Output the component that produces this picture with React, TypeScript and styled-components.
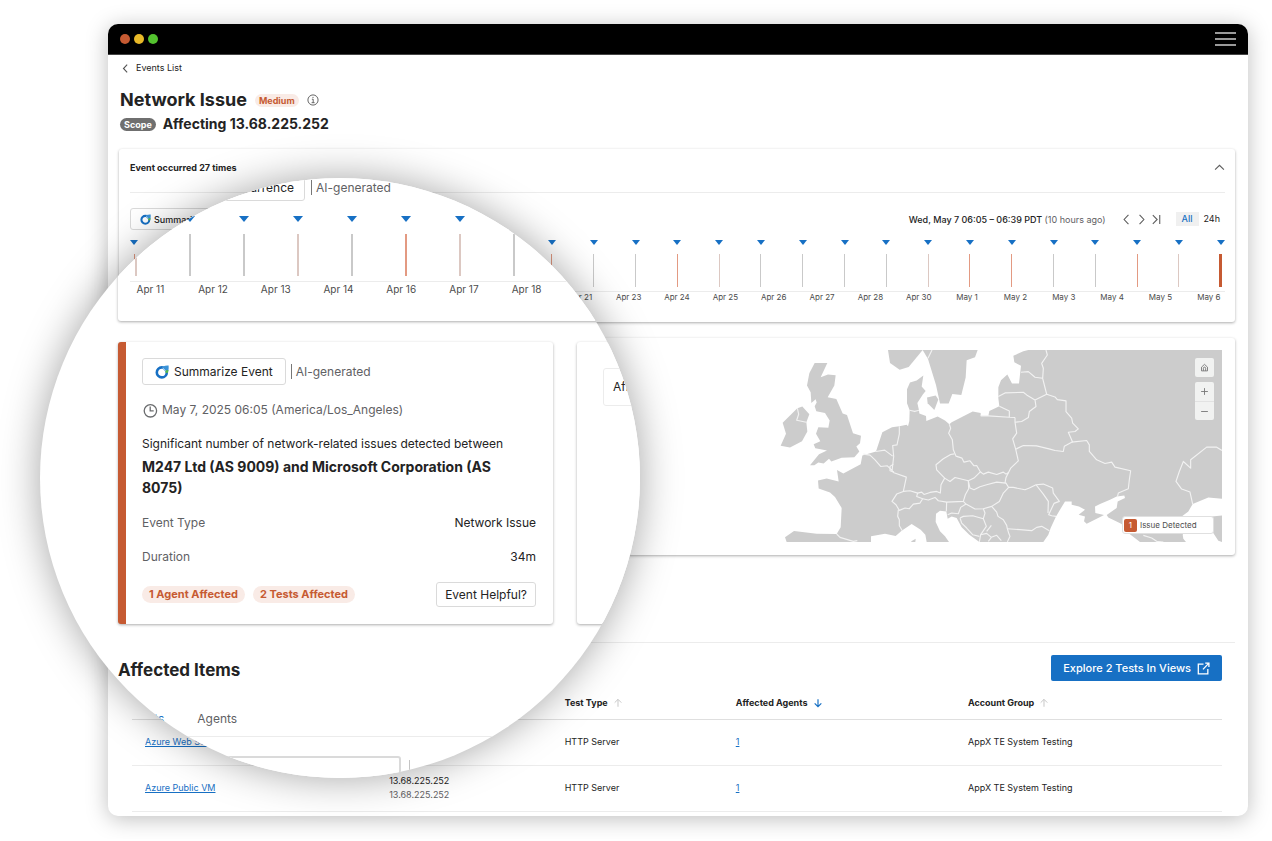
import React from "react";
import styled, { createGlobalStyle } from "styled-components";

const GlobalStyle = createGlobalStyle`
  *, *::before, *::after { box-sizing: border-box; }
  body { margin: 0; background: #fff; font-family: Inter, "Liberation Sans", sans-serif; color: #232323; }
  button, input { font: inherit; color: inherit; }
  h1, h2, h3, p, dl, dd, dt { margin: 0; }
`;

const C = { blue: "#1770c4", orange: "#c65a32", chip: "#f9ebe6", grey: "#5f6164", line: "#ececec", edge: "#dadada", text: "#232323" };

/* ---------- Window ---------- */

const Stage = styled.main`
  position: relative;
  padding: 24px 24px 23px 108px;
  overflow: hidden;
`;

const Window = styled.section`
  border-radius: 10px;
  background: #fff;
  overflow: hidden;
  box-shadow: 0 3px 22px rgba(0, 0, 0, 0.26);
`;

const TitleBar = styled.header`
  display: flex;
  align-items: center;
  justify-content: space-between;
  height: 30px;
  padding: 0 12px;
  background: #000;
  border-bottom: 1px solid #444;
  box-sizing: content-box;
`;

const Lights = styled.div`
  display: flex;
  gap: 4px;
`;

const Light = styled.span<{ $color: string }>`
  width: 10px;
  height: 10px;
  border-radius: 50%;
  background: ${(p) => p.$color};
`;

const IconButton = styled.button`
  display: inline-flex;
  align-items: center;
  justify-content: center;
  padding: 0;
  border: 0;
  background: none;
  color: #5d5d5d;
`;

const Body = styled.div`
  padding: 4px 13px 4px 11px;
`;

const Heading = styled.div`
  padding-left: 1px;
`;

const BackLink = styled.a`
  display: flex;
  align-items: center;
  gap: 5px;
  height: 18px;
  font-size: 9px;
  line-height: 18px;
  color: ${C.text};
  text-decoration: none;
`;

const TitleRow = styled.div<{ $top: number; $gap: number }>`
  display: flex;
  align-items: center;
  gap: ${(p) => p.$gap}px;
  margin-top: ${(p) => p.$top}px;
`;

const Title = styled.h1`
  font-size: 18px;
  line-height: 24px;
  font-weight: 700;
`;

const Subtitle = styled.h2`
  font-size: 14px;
  line-height: 20px;
  font-weight: 700;
`;

const Chip = styled.span<{ $solid?: boolean; $large?: boolean }>`
  display: inline-block;
  padding: 0 ${(p) => (p.$large ? 7 : 4)}px;
  border-radius: 9px;
  font-size: ${(p) => (p.$large ? 11 : 9)}px;
  line-height: ${(p) => (p.$large ? 17 : 13)}px;
  font-weight: 700;
  background: ${(p) => (p.$solid ? "#6f6f6f" : C.chip)};
  color: ${(p) => (p.$solid ? "#fff" : C.orange)};
`;

const Card = styled.section`
  background: #fff;
  border-radius: 3px;
  box-shadow: 0 1px 3px rgba(0, 0, 0, 0.33);
`;

/* ---------- Timeline ---------- */

const TimelineCard = styled(Card)`
  margin-top: 15px;
  height: 173px;
`;

const TimelineHead = styled.div`
  display: flex;
  align-items: center;
  justify-content: space-between;
  height: 44px;
  margin: 0 10px 0 11px;
  padding-bottom: 6px;
  border-bottom: 1px solid ${C.line};
  font-size: 9px;
  font-weight: 700;
`;

const TimelineTools = styled.div`
  display: flex;
  align-items: center;
  justify-content: space-between;
  height: 22px;
  margin: 15px 10px 0 11px;
  font-size: 9px;
`;

const OutlineButton = styled.button<{ $large?: boolean }>`
  display: inline-flex;
  align-items: center;
  gap: ${(p) => (p.$large ? 5 : 3)}px;
  height: ${(p) => (p.$large ? 27 : 22)}px;
  padding: 0 ${(p) => (p.$large ? 12 : 9)}px;
  border: 1px solid ${C.edge};
  border-radius: 3px;
  background: #fff;
  font-size: ${(p) => (p.$large ? 12 : 9)}px;
  font-weight: ${(p) => (p.$large ? 400 : 500)};
  white-space: nowrap;
`;

const Pager = styled.div`
  display: flex;
  align-items: center;
  height: 16px;
  font-weight: 500;
`;

const Muted = styled.span`
  color: ${C.grey};
  font-weight: 400;
`;

const Arrows = styled.div`
  display: flex;
  align-items: center;
  gap: 2px;
  margin: 0 13px 0 14px;
`;

const RangeButton = styled.button<{ $active?: boolean }>`
  height: 14px;
  padding: 0 ${(p) => (p.$active ? 6 : 5)}px;
  border: 0;
  background: ${(p) => (p.$active ? "#f0f0f0" : "none")};
  color: ${(p) => (p.$active ? C.blue : C.text)};
  font-size: 9px;
  line-height: 14px;
  font-weight: ${(p) => (p.$active ? 500 : 400)};
`;

const Markers = styled.div<{ $large?: boolean }>`
  display: flex;
  justify-content: ${(p) => (p.$large ? "flex-start" : "space-between")};
  gap: ${(p) => (p.$large ? 44 : 0)}px;
  margin-top: ${(p) => (p.$large ? 15 : 10)}px;
  padding: 0 ${(p) => (p.$large ? 0 : 9)}px 0 ${(p) => (p.$large ? 13 : 10)}px;
  border-bottom: 1px solid transparent;
`;

const Marker = styled.div<{ $large?: boolean }>`
  display: flex;
  flex: none;
  flex-direction: column;
  align-items: center;
  width: 10px;
  gap: ${(p) => (p.$large ? 12 : 9)}px;
`;

const Pointer = styled.span<{ $large?: boolean }>`
  width: 0;
  height: 0;
  border-left: ${(p) => (p.$large ? 5 : 4)}px solid transparent;
  border-right: ${(p) => (p.$large ? 5 : 4)}px solid transparent;
  border-top: ${(p) => (p.$large ? 6 : 5)}px solid ${C.blue};
`;

const Tick = styled.span<{ $large?: boolean; $color: string; $wide?: boolean }>`
  width: ${(p) => (p.$wide ? 3 : p.$large ? 2 : 1)}px;
  height: ${(p) => (p.$large ? 42 : 33)}px;
  background: ${(p) => p.$color};
`;

const Dates = styled.div<{ $large?: boolean }>`
  display: flex;
  margin-top: ${(p) => (p.$large ? 4 : 3)}px;
  margin-left: ${(p) => (p.$large ? 12 : 10)}px;
  margin-right: ${(p) => (p.$large ? 0 : 10)}px;
  border-top: 1px solid ${C.line};
`;

const DateLabels = styled.div<{ $large?: boolean }>`
  display: grid;
  flex: ${(p) => (p.$large ? "0 0 439px" : "1")};
  grid-template-columns: repeat(${(p) => (p.$large ? 7 : 23)}, minmax(0, 1fr));
  margin: 0 ${(p) => (p.$large ? 0 : -8)}px 0 ${(p) => (p.$large ? -11 : -8)}px;
  font-size: ${(p) => (p.$large ? 10 : 8)}px;
  line-height: ${(p) => (p.$large ? 14 : 10)}px;
  text-align: center;
  color: #4c4c4c;
  white-space: nowrap;
`;

/* ---------- Map ---------- */

const MapCard = styled(Card)`
  display: flex;
  justify-content: flex-end;
  margin-top: 16px;
  padding: 12px 13px 13px;
`;

const MapFrame = styled.div`
  position: relative;
  width: 442px;
  height: 192px;
`;

const MapControls = styled.div`
  position: absolute;
  top: 8px;
  right: 8px;
  display: grid;
  gap: 5px;
`;

const ControlGroup = styled.div`
  display: grid;
  border-radius: 2px;
  overflow: hidden;
  background: #f1f2f1;
`;

const MapButton = styled(IconButton)`
  width: 19px;
  height: 19px;
  color: #777;
  & + & { border-top: 1px solid #e2e2e2; }
`;

const Legend = styled.div`
  position: absolute;
  right: 8px;
  bottom: 8px;
  display: flex;
  align-items: center;
  gap: 3px;
  width: 92px;
  height: 18px;
  padding: 0 1px;
  border: 1px solid #e0e0e0;
  border-radius: 3px;
  background: #fff;
  font-size: 8px;
  color: #4c4c4c;
`;

const LegendCount = styled.span`
  width: 13px;
  height: 13px;
  border-radius: 2px;
  background: ${C.orange};
  color: #fff;
  line-height: 13px;
  text-align: center;
`;

/* ---------- Items table ---------- */

const Items = styled.section`
  margin-top: 87px;
  padding: 12px 13px 0;
  border-top: 1px solid ${C.line};
`;

const Actions = styled.div`
  display: flex;
  justify-content: flex-end;
`;

const PrimaryButton = styled.button`
  display: inline-flex;
  align-items: center;
  gap: 6px;
  height: 26px;
  padding: 0 12px;
  border: 0;
  border-radius: 2px;
  background: ${C.blue};
  color: #fff;
  font-size: 11px;
  font-weight: 500;
`;

const Table = styled.table`
  width: 100%;
  margin-top: 6px;
  border-collapse: collapse;
  table-layout: fixed;
  font-size: 9px;
  th, td { padding: 0 13px; text-align: left; border-bottom: 1px solid ${C.line}; }
  th { height: 32px; font-weight: 700; border-bottom-color: #dfdfdf; white-space: nowrap; }
  td { height: 46px; line-height: 14px; }
  th svg { vertical-align: -2px; margin-left: 3px; }
`;

const Link = styled.a`
  color: ${C.blue};
  text-decoration: underline;
`;

/* ---------- Magnifier ---------- */

const Lens = styled.aside`
  position: absolute;
  top: 178px;
  left: 40px;
  width: 600px;
  height: 600px;
  border-radius: 50%;
  overflow: hidden;
  padding-left: 78px;
  background: #fff;
  box-shadow: 0 0 40px rgba(0, 0, 0, 0.36);
`;

const LensTimeline = styled(Card)`
  height: 143px;
`;

const LensTop = styled.div`
  display: flex;
  align-items: flex-end;
  gap: 6px;
  height: 23px;
  padding-left: 24px;
`;

const LensButton = styled(OutlineButton)`
  width: 163px;
  padding-right: 10px;
  justify-content: flex-end;
`;

const AiNote = styled.span`
  padding-left: 4px;
  border-left: 1px solid #777;
  font-size: 12px;
  line-height: 15px;
  color: ${C.grey};
`;

const AiSlot = styled.div`
  display: flex;
  align-items: center;
  height: 27px;
`;

const LensCards = styled.div`
  display: grid;
  grid-template-columns: 435px 435px;
  gap: 24px;
  margin-top: 21px;
`;

const EventCard = styled(Card)`
  height: 282px;
  padding: 16px 17px 0 16px;
  border-left: 8px solid ${C.orange};
  font-size: 12px;
`;

const EventTop = styled.div`
  display: flex;
  align-items: center;
  gap: 5px;
`;

const TimeRow = styled.p`
  display: flex;
  align-items: center;
  gap: 4px;
  margin-top: 17px;
  line-height: 16px;
  color: ${C.grey};
`;

const Summary = styled.p`
  margin-top: 18px;
  line-height: 16px;
`;

const Parties = styled.h3`
  margin-top: 4px;
  padding-right: 24px;
  font-size: 14px;
  line-height: 21px;
  font-weight: 700;
`;

const Facts = styled.dl`
  display: grid;
  gap: 18px;
  margin-top: 17px;
  line-height: 16px;
`;

const Fact = styled.div`
  display: flex;
  justify-content: space-between;
  dt { color: ${C.grey}; }
`;

const EventFoot = styled.div`
  display: flex;
  align-items: center;
  gap: 8px;
  margin-top: 17px;
`;

const HelpfulButton = styled(OutlineButton)`
  height: 25px;
  margin-left: auto;
  padding: 0 8px;
`;

const AgentsCard = styled(Card)`
  padding: 26px;
`;

const AgentsBox = styled.div`
  height: 38px;
  padding: 0 9px;
  border: 1px solid ${C.line};
  border-radius: 3px;
  font-size: 12px;
  line-height: 36px;
`;

const LensTitle = styled.h2`
  margin-top: 35px;
  font-size: 17px;
  line-height: 22px;
  font-weight: 700;
`;

const Tabs = styled.nav`
  display: flex;
  gap: 33px;
  margin-top: 28px;
  padding: 0 0 7px 16px;
  border-bottom: 1px solid ${C.line};
  font-size: 12px;
  line-height: 20px;
`;

const Tab = styled.a<{ $active?: boolean }>`
  color: ${(p) => (p.$active ? C.blue : C.grey)};
  text-decoration: none;
`;

const SearchRow = styled.div`
  display: flex;
  align-items: flex-start;
  gap: 8px;
  margin-top: 19px;
`;

const SearchInput = styled.input`
  width: 283px;
  height: 32px;
  border: 2px solid ${C.edge};
  border-radius: 3px;
`;

const Divider = styled.span`
  width: 1px;
  height: 20px;
  margin-top: 4px;
  background: #c4c4c4;
`;

/* ---------- Icons ---------- */

type IconProps = { size?: number; d: string; stroke?: number; color?: string };

const Icon = ({ size = 12, d, stroke = 1, color = "currentColor" }: IconProps) => (
  <svg width={size} height={size} viewBox="0 0 12 12" fill="none" stroke={color} strokeWidth={stroke} aria-hidden="true">
    <path d={d} />
  </svg>
);

const P = {
  left: "M7.8 1.8 3.8 6l4 4.2",
  right: "M4.2 1.8 8.2 6l-4 4.2",
  last: "M2.6 2 6.6 6l-4 4M9 1.8v8.4",
  up: "M1.2 8.4 6 3.6l4.8 4.8",
  sortUp: "M6 10.5V1.8M2 5.6l4-4 4 4",
  sortDown: "M6 1.5v8.7M2 6.4l4 4 4-4",
  external: "M6 2H1.2v9H10V6.5M7.6 1H11v3.6M11 1 5.5 6.8",
  plus: "M6 1.5v9M1.5 6h9",
  minus: "M1.5 6h9",
  home: "M2 5.5 6 1.8l4 3.7V10.5H2zM4.5 10.5V7a1.5 1.5 0 0 1 3 0v3.5",
};

const InfoIcon = () => (
  <svg width="12" height="12" viewBox="0 0 12 12" fill="none" stroke="#555" aria-hidden="true">
    <circle cx="6" cy="6" r="5.1" strokeWidth="0.9" />
    <path d="M4.9 5.2H6.2V8.6M4.6 8.7h3M6 2.9v1.1" strokeWidth="0.9" />
  </svg>
);

const ClockIcon = () => (
  <svg width="16" height="16" viewBox="0 0 16 16" fill="none" stroke="#6a6c6e" strokeWidth="1.3" aria-hidden="true">
    <circle cx="8.4" cy="8.8" r="6.2" />
    <path d="M8.2 4.6v4.3h3.5" />
  </svg>
);

const SparkIcon = ({ size }: { size: number }) => (
  <svg width={size} height={size} viewBox="0 0 14 14" fill="none" aria-hidden="true">
    <circle cx="6.8" cy="7.4" r="5" stroke="#1770c4" strokeWidth="2.6" />
    <path d="M8 1.4C10 .6 12 .4 13.6.6 13.8 3 13.6 5 13 7L10.4 6.6 7.6 3.8z" fill="#3a93d8" />
    <path d="M10.2 5.6 13.5 5 13 7.8 10.8 8z" fill="#57b947" />
    <path d="M7.6 3 10.6 5.8" stroke="#e4f0fa" strokeWidth="0.8" />
  </svg>
);

const MenuIcon = () => (
  <svg width="21" height="16" viewBox="0 0 21 16" aria-hidden="true">
    <path d="M0 2h21M0 8h21M0 14h21" stroke="#9a9a9a" strokeWidth="2" />
  </svg>
);

const LAND = [
  "M134 84 172 84 152 127 174 119 197 121 193 152 173 187 199 192 218 236 231 240 249 295 273 303 270 325 259 335 268 350 253 367 215 369 184 380 177 372 161 386 145 383 133 391 120 391 147 358 171 347 152 343 136 340 131 328 151 319 138 297 145 277 175 279 179 257 165 234 139 229 134 214 140 203 137 193 124 204 122 172 111 152 118 115Z",
  "M82 220 97 215 118 238 109 262 112 290 96 319 60 338 32 333 48 297 38 264Z",
  "M354 45 458 45 416 96 389 104 360 84Z",
  "M458 45 623 45 615 67 590 76 587 128 574 180 547 177 536 206 510 206 498 150 474 72Z",
  "M460 122 455 155 467 168 459 178 442 204 447 226 419 226 411 205 411 163 420 143 440 137Z",
  "M471 188 497 182 505 194 493 225 473 205Z",
  "M419 226 447 226 448 236 468 243 469 258 503 245 525 257 538 268 545 262 608 230 632 234 632 243 655 243 658 228 688 214 685 190 685 157 693 136 712 119 726 146 747 146 753 92 733 82 730 62 760 49 775 45 1356 45 1356 492 1315 488 1268 508 1255 530 1235 545 1225 560 1245 590 1238 600 1240 612 1248 622 1110 622 1075 595 1055 568 1015 548 1010 541 1040 520 1043 500 1065 490 1063 482 1040 485 1020 495 990 508 975 515 976 535 1002 541 980 552 950 567 942 560 945 545 926 540 945 525 927 515 905 510 905 500 885 500 858 545 842 580 835 600 820 622 628 622 598 600 575 578 560 550 545 545 533 552 529 530 510 528 498 537 497 562 510 590 525 605 537 622 470 622 466 600 452 585 425 568 395 588 377 604 345 597 303 605 303 622 50 622 45 608 72 589 140 597 200 598 212 578 215 520 195 487 180 473 146 461 144 437 170 431 206 440 201 406 220 416 272 388 277 362 318 350 337 292 366 277 388 274 410 270 414 274 418 258Z",
  "M424 620 437 612 436 622 424 622Z",
  "M1290 560 1325 545 1356 542 1356 622 1345 618 1320 580Z",
];

const BORDERS = [
  "M82 220 86 238 80 256 109 262",
  "M486 45 474 70M419 226 434 230 447 226",
  "M388 274 388 297 381 330 368 332 371 365 366 410M318 350 344 346 368 364M280 358 300 361 315 375 332 395 352 393 363 404 372 414 409 427 400 470",
  "M370 388 360 395 360 408 372 412",
  "M400 470 380 478 366 500 378 510 388 527 405 520 418 522 430 508 450 505 458 492 440 485 443 475 420 468 400 470",
  "M385 525 383 545 388 555 388 573 397 588",
  "M443 475 455 472 462 479 480 473 500 470 511 475 513 450 524 430 500 405 498 390 520 372 542 359 553 357",
  "M458 492 475 496 495 488 505 498 530 502 580 500 586 480 596 462 595 438",
  "M538 268 542 280 536 295 547 315 550 345 558 364 576 370 582 382 600 378 612 393 620 392 631 411 612 430 595 438 555 428 540 440 524 430",
  "M631 411 640 418 655 412 680 419 700 412 708 418 716 413",
  "M595 438 600 460 612 465 630 456 650 450 680 442 708 445 716 458 700 475 688 500 665 515 640 522 615 523 588 508 580 500",
  "M530 502 529 530M533 540 545 535 565 537 572 518 588 508",
  "M570 550 580 545 608 543 640 552M570 550 575 565 590 580 608 600 628 605M640 522 645 535 640 552 649 575 632 600 628 622",
  "M632 600 650 596 664 608 655 620M664 608 680 602 694 618M664 572 650 590M665 515 680 532 684 545 700 555 710 572 712 582 716 595 720 605 712 622",
  "M712 582 750 585 785 588 800 578 815 575 838 588",
  "M716 458 730 458 765 465 778 460 798 450 820 448 848 460 850 475 868 500 852 506 836 540 845 543 858 545M798 450 820 478 835 500 834 535",
  "M737 343 760 332 800 333 840 343 855 347 880 350 883 334 905 322 950 317 958 330 958 350 980 375 1005 386 1025 382 1035 397 1082 408 1078 435 1075 462 1045 475 1042 487",
  "M735 248 735 262 740 295 728 312 737 343 745 378 722 400 708 428 705 445M632 243 655 243 718 247 735 248M688 214 718 228 718 247",
  "M685 185 705 174 760 172 770 180 795 195 798 215 778 230 775 248 755 260 735 262M795 195 830 178 818 130M753 112 775 110 795 127 818 130 820 100 815 85 832 60 828 45",
  "M830 178 855 186 862 194 888 198 888 230 905 250 908 265 925 282 915 290 895 292 908 322",
  "M1356 347 1340 337 1310 337 1262 375 1262 400 1240 380 1228 410 1218 440 1235 463 1260 472 1268 508M1120 602 1145 610 1160 620 1180 622",
  "M200 598 210 608 250 620 262 618",
];

const EuropeMap = () => (
  <svg width="442" height="192" viewBox="30 45 1326 577" preserveAspectRatio="none" role="img" aria-label="Map of Europe">
    {LAND.map((d) => <path key={d} d={d} fill="#cccccc" />)}
    {BORDERS.map((d) => <path key={d} d={d} fill="none" stroke="#f2f2f2" strokeWidth="3.4" strokeLinejoin="round" />)}
  </svg>
);

/* ---------- Data ---------- */

const GREY = "#c9c9c9";
const SALMON = "#e39a82";
const PALE = "#dcc8c2";

const TICKS = [
  SALMON, GREY, GREY, SALMON, GREY, SALMON, GREY, GREY, GREY, SALMON, SALMON, GREY, GREY, SALMON,
  PALE, GREY, GREY, GREY, GREY, PALE, SALMON, SALMON, GREY, GREY, SALMON, PALE, C.orange,
];

const LENS_TICKS = [PALE, GREY, GREY, PALE, GREY, SALMON, PALE, GREY];

const APRIL = [11, 12, 13, 14, 16, 17, 18, 19, 20, 21, 23, 24, 25, 26, 27, 28, 30].map((n) => `Apr ${n}`);
const DATES = [...APRIL, ...[1, 2, 3, 4, 5, 6].map((n) => `May ${n}`)];

// The magnifier repeats the first dates at its own scale, so the strip behind it starts at Apr 21.
const FIRST_UNCOVERED = DATES.indexOf("Apr 21");
const STRIP_DATES = DATES.map((d, i) => (i < FIRST_UNCOVERED ? "" : d));

const ROWS = [
  { name: "Azure Web Server", target: "" },
  { name: "Azure Public VM", target: "13.68.225.252" },
];

const Timeline = ({ ticks, dates, large }: { ticks: string[]; dates: string[]; large?: boolean }) => (
  <>
    <Markers $large={large}>
      {ticks.map((color, i) => (
        <Marker key={i} $large={large}>
          <Pointer $large={large} />
          <Tick $large={large} $color={color} $wide={color === C.orange} />
        </Marker>
      ))}
    </Markers>
    <Dates $large={large}>
      <DateLabels $large={large}>
        {dates.map((d, i) => <span key={i}>{d}</span>)}
      </DateLabels>
    </Dates>
  </>
);

const Magnifier = () => (
  <Lens>
    <LensTimeline>
      <LensTop>
        <LensButton $large>Occurrence</LensButton>
        <AiSlot><AiNote>AI-generated</AiNote></AiSlot>
      </LensTop>
      <Timeline ticks={LENS_TICKS} dates={DATES.slice(0, 7)} large />
    </LensTimeline>
    <LensCards>
      <EventCard>
        <EventTop>
          <OutlineButton $large><SparkIcon size={14} />Summarize Event</OutlineButton>
          <AiNote>AI-generated</AiNote>
        </EventTop>
        <TimeRow><ClockIcon />May 7, 2025 06:05 (America/Los_Angeles)</TimeRow>
        <Summary>Significant number of network-related issues detected between</Summary>
        <Parties>M247 Ltd (AS 9009) and Microsoft Corporation (AS 8075)</Parties>
        <Facts>
          <Fact><dt>Event Type</dt><dd>Network Issue</dd></Fact>
          <Fact><dt>Duration</dt><dd>34m</dd></Fact>
        </Facts>
        <EventFoot>
          <Chip $large>1 Agent Affected</Chip>
          <Chip $large>2 Tests Affected</Chip>
          <HelpfulButton $large>Event Helpful?</HelpfulButton>
        </EventFoot>
      </EventCard>
      <AgentsCard>
        <AgentsBox>Affected</AgentsBox>
      </AgentsCard>
    </LensCards>
    <LensTitle>Affected Items</LensTitle>
    <Tabs>
      <Tab href="#tests" $active>Tests</Tab>
      <Tab href="#agents">Agents</Tab>
    </Tabs>
    <SearchRow>
      <SearchInput aria-label="Search items" />
      <Divider />
    </SearchRow>
  </Lens>
);

export default function App() {
  return (
    <>
      <GlobalStyle />
      <Stage>
        <Window>
          <TitleBar>
            <Lights>
              <Light $color="#c65a32" />
              <Light $color="#e8b928" />
              <Light $color="#54c22f" />
            </Lights>
            <IconButton aria-label="Menu"><MenuIcon /></IconButton>
          </TitleBar>
          <Body>
            <Heading>
              <BackLink href="#events"><Icon size={11} d={P.left} stroke={1.2} color="#555" />Events List</BackLink>
              <TitleRow $top={11} $gap={8}>
                <Title>Network Issue</Title>
                <Chip>Medium</Chip>
                <InfoIcon />
              </TitleRow>
              <TitleRow $top={2} $gap={7}>
                <Chip $solid>Scope</Chip>
                <Subtitle>Affecting 13.68.225.252</Subtitle>
              </TitleRow>
            </Heading>
            <TimelineCard>
              <TimelineHead>
                <span>Event occurred 27 times</span>
                <IconButton aria-label="Collapse"><Icon size={11} d={P.up} stroke={1.2} /></IconButton>
              </TimelineHead>
              <TimelineTools>
                <OutlineButton><SparkIcon size={11} />Summarize Event</OutlineButton>
                <Pager>
                  <span>Wed, May 7 06:05 – 06:39 PDT <Muted>(10 hours ago)</Muted></span>
                  <Arrows>
                    <IconButton aria-label="Previous"><Icon size={13} d={P.left} /></IconButton>
                    <IconButton aria-label="Next"><Icon size={13} d={P.right} /></IconButton>
                    <IconButton aria-label="Latest"><Icon size={13} d={P.last} /></IconButton>
                  </Arrows>
                  <RangeButton $active>All</RangeButton>
                  <RangeButton>24h</RangeButton>
                </Pager>
              </TimelineTools>
              <Timeline ticks={TICKS} dates={STRIP_DATES} />
            </TimelineCard>
            <MapCard>
              <MapFrame>
                <EuropeMap />
                <MapControls>
                  <ControlGroup>
                    <MapButton aria-label="Reset map"><Icon size={9} d={P.home} stroke={1.2} /></MapButton>
                  </ControlGroup>
                  <ControlGroup>
                    <MapButton aria-label="Zoom in"><Icon size={9} d={P.plus} stroke={1.2} /></MapButton>
                    <MapButton aria-label="Zoom out"><Icon size={9} d={P.minus} stroke={1.2} /></MapButton>
                  </ControlGroup>
                </MapControls>
                <Legend><LegendCount>1</LegendCount>Issue Detected</Legend>
              </MapFrame>
            </MapCard>
            <Items>
              <Actions>
                <PrimaryButton>Explore 2 Tests In Views<Icon size={13} d={P.external} stroke={1.2} /></PrimaryButton>
              </Actions>
              <Table>
                <colgroup>
                  <col width="22.4%" /><col width="16.1%" /><col width="15.7%" /><col width="21.3%" /><col />
                </colgroup>
                <thead>
                  <tr>
                    <th aria-label="Test Name" />
                    <th aria-label="Target" />
                    <th>Test Type <Icon size={10} d={P.sortUp} color="#bdbdbd" /></th>
                    <th>Affected Agents <Icon size={10} d={P.sortDown} stroke={1.4} color={C.blue} /></th>
                    <th>Account Group <Icon size={10} d={P.sortUp} color="#bdbdbd" /></th>
                  </tr>
                </thead>
                <tbody>
                  {ROWS.map(({ name, target }) => (
                    <tr key={name}>
                      <td><Link href="#test">{name}</Link></td>
                      <td>{target}<br /><Muted>{target}</Muted></td>
                      <td>HTTP Server</td>
                      <td><Link href="#agents">1</Link></td>
                      <td>AppX TE System Testing</td>
                    </tr>
                  ))}
                </tbody>
              </Table>
            </Items>
          </Body>
        </Window>
        <Magnifier />
      </Stage>
    </>
  );
}
